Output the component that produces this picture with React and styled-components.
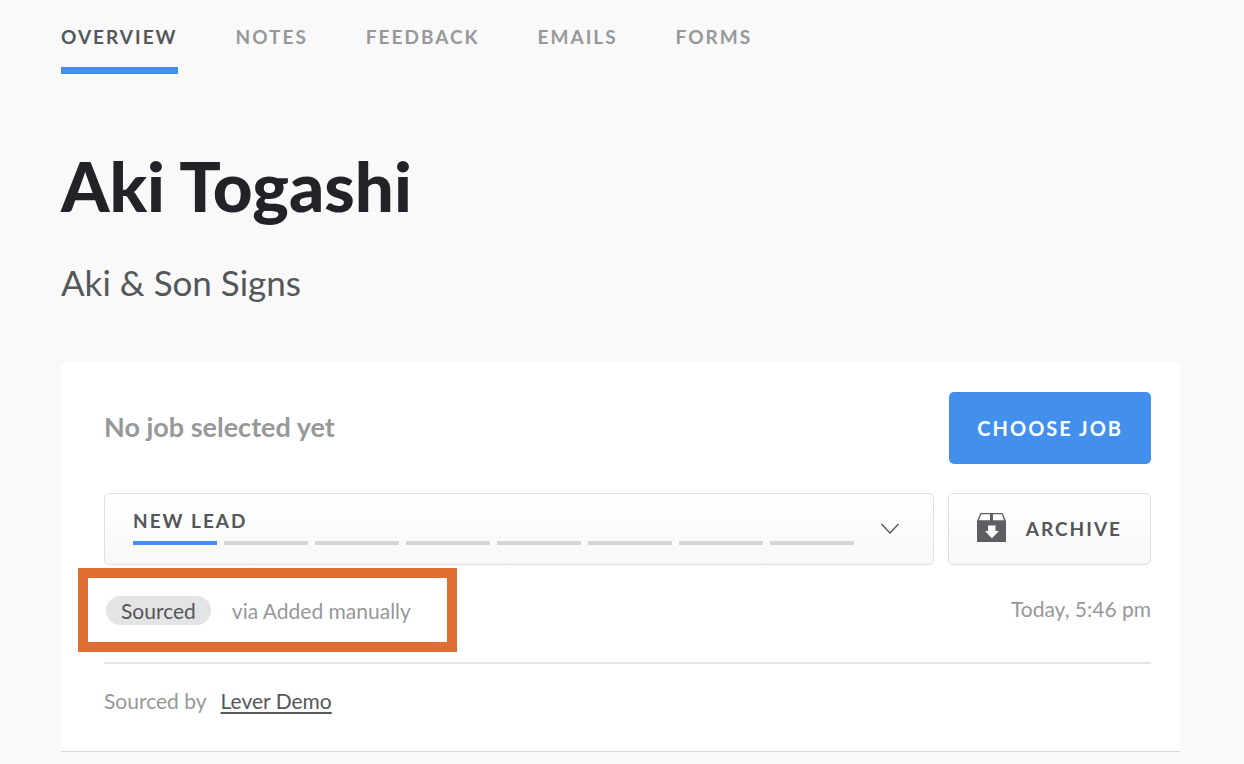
import React from "react";
import styled, { createGlobalStyle } from "styled-components";

const GlobalStyle = createGlobalStyle`
    * {
        box-sizing: border-box;
    }
    body {
        margin: 0;
        background: #f9f9f9;
        color: #55565a;
        font-family: Lato, "Open Sans", sans-serif;
        -webkit-font-smoothing: antialiased;
    }
    button {
        font-family: inherit;
        color: inherit;
        cursor: pointer;
    }
`;

const Page = styled.main`
    padding: 0 64px 12px 61px;
`;
const Tabs = styled.nav`
    display: flex;
    gap: 58px;
`;
const Tab = styled.a`
    padding: 22px 0 15px;
    border-bottom: 7px solid ${(props) => (props.$active ? "#4390ec" : "transparent")};
    color: ${(props) => (props.$active ? "#55565a" : "#97989a")};
    font-size: 19px;
    font-weight: 700;
    line-height: 30px;
    letter-spacing: 2px;
    text-decoration: none;
`;
const Name = styled.h1`
    margin: 70px 0 0;
    color: #222328;
    font-size: 69px;
    font-weight: 900;
    line-height: 84px;
`;
const Company = styled.p`
    margin: 32px 0 0;
    font-size: 35px;
    line-height: 44px;
`;

const Card = styled.section`
    margin-top: 59px;
    padding: 29px 29px 35px 43px;
    background: #ffffff;
    border-bottom: 1px solid #d8d8d9;
`;
const JobRow = styled.div`
    display: flex;
    align-items: center;
    justify-content: space-between;
`;
const JobTitle = styled.h2`
    margin: 0;
    padding-bottom: 2px;
    color: #97989a;
    font-size: 27px;
    font-weight: 700;
    line-height: 36px;
`;
const ChooseButton = styled.button`
    height: 72px;
    padding: 0 28px;
    border: 0;
    border-radius: 5px;
    background: #4390ec;
    color: #ffffff;
    font-size: 20px;
    font-weight: 700;
    letter-spacing: 2px;
`;
const StageRow = styled.div`
    display: flex;
    gap: 14px;
    margin-top: 29px;
`;
const OutlineButton = styled.button`
    display: flex;
    align-items: center;
    height: 72px;
    padding: 0 28px;
    border: 1px solid #dfe0e1;
    border-radius: 5px;
    background: linear-gradient(#ffffff, #f8f8f8);
    font-size: 19px;
    font-weight: 700;
    line-height: 24px;
    letter-spacing: 2px;
`;
const StageButton = styled(OutlineButton)`
    flex: 1;
    gap: 27px;
    padding-right: 34px;
`;
const ArchiveButton = styled(OutlineButton)`
    gap: 20px;

    svg {
        margin-bottom: 4px;
    }
`;
const Stage = styled.span`
    flex: 1;
    padding-bottom: 4px;
    text-align: left;
`;
const Steps = styled.span`
    display: flex;
    gap: 7px;
    margin-top: 8px;
`;
const Step = styled.span`
    flex: 1;
    height: 4px;
    background: ${(props) => (props.$done ? "#4390ec" : "#d6d6d6")};
`;

const SourceRow = styled.div`
    display: flex;
    align-items: center;
    justify-content: space-between;
    height: 99px;
    padding-bottom: 6px;
    border-bottom: 2px solid #e3e4e4;
    color: #97989a;
    font-size: 21px;
    line-height: 28px;
`;
const Source = styled.div`
    position: relative;
    display: flex;
    align-items: center;
    gap: 21px;
    padding-left: 2px;
`;
const Highlight = styled.span`
    position: absolute;
    inset: -28px -46px -27px -26px;
    border: 10px solid #e06d32;
    pointer-events: none;
`;
const Badge = styled.span`
    padding: 1px 15px 0;
    border-radius: 15px;
    background: #e3e4e6;
    color: #55565a;
`;
const Time = styled.time`
    padding-bottom: 4px;
`;
const SourcedBy = styled.p`
    display: flex;
    gap: 14px;
    margin: 22px 0 0;
    color: #97989a;
    font-size: 21px;
    line-height: 30px;
`;
const PersonLink = styled.a`
    color: #55565a;
    text-decoration: underline;
    text-decoration-thickness: 2px;
    text-underline-offset: 3px;
    text-decoration-skip-ink: none;
`;

const ChevronIcon = () => (
    <svg width="18" height="12" viewBox="0 0 18 12" fill="none" stroke="#55565a" strokeWidth="1.3" aria-hidden="true">
        <path d="M.5 1 9 10l8.500-9" />
    </svg>
);

const ArchiveIcon = () => (
    <svg width="29" height="29" viewBox="0 0 29 29" aria-hidden="true">
        <path fill="#5d5e61" d="M3.500 0h22L29 8v21H0V8z" />
        <path fill="#ffffff" d="M4.300 1.300H13V7.200H2zM16 1.300h8.700L27 7.200H16z" />
        <path fill="#ffffff" d="M11 12.500h7.500V18H22l-7.200 7.200L8 18h3z" />
    </svg>
);

const tabs = ["OVERVIEW", "NOTES", "FEEDBACK", "EMAILS", "FORMS"];
const stageCount = 8;

function App() {
    const [active, setActive] = React.useState("OVERVIEW");

    return (
        <Page>
            <GlobalStyle />
            <Tabs>
                {tabs.map((tab) => (
                    <Tab
                        key={tab}
                        href={"#" + tab.toLowerCase()}
                        $active={tab === active}
                        onClick={() => setActive(tab)}
                    >
                        {tab}
                    </Tab>
                ))}
            </Tabs>
            <Name>Aki Togashi</Name>
            <Company>Aki &amp; Son Signs</Company>

            <Card>
                <JobRow>
                    <JobTitle>No job selected yet</JobTitle>
                    <ChooseButton type="button">CHOOSE JOB</ChooseButton>
                </JobRow>
                <StageRow>
                    <StageButton type="button">
                        <Stage>
                            NEW LEAD
                            <Steps>
                                {Array.from({ length: stageCount }, (_, i) => (
                                    <Step key={i} $done={i === 0} />
                                ))}
                            </Steps>
                        </Stage>
                        <ChevronIcon />
                    </StageButton>
                    <ArchiveButton type="button">
                        <ArchiveIcon />
                        ARCHIVE
                    </ArchiveButton>
                </StageRow>
                <SourceRow>
                    <Source>
                        <Badge>Sourced</Badge>
                        <span>via Added manually</span>
                        <Highlight />
                    </Source>
                    <Time>Today, 5:46 pm</Time>
                </SourceRow>
                <SourcedBy>
                    Sourced by
                    <PersonLink href="#lever-demo">Lever Demo</PersonLink>
                </SourcedBy>
            </Card>
        </Page>
    );
}

export default App;
